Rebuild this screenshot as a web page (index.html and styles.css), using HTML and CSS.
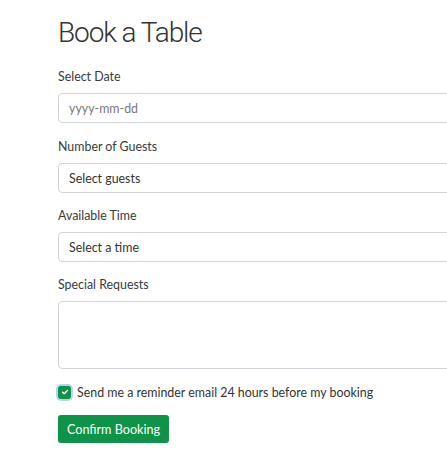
FILE: index.html
```html
<!DOCTYPE html>
<html>
<head>
<meta charset="utf-8">
<link rel="stylesheet" href="styles.css">
</head>
<body>
<main class="page">
  <h1 class="title">Book a Table</h1>
  <form class="form">
    <div class="group">
      <label class="label">Select Date</label>
      <div class="field muted">yyyy-mm-dd</div>
    </div>
    <div class="group">
      <label class="label">Number of Guests</label>
      <div class="field">Select guests</div>
    </div>
    <div class="group">
      <label class="label">Available Time</label>
      <div class="field">Select a time</div>
    </div>
    <div class="group">
      <label class="label">Special Requests</label>
      <div class="field area"></div>
    </div>
    <div class="check-row">
      <span class="check"><svg viewBox="0 0 10 10" width="8" height="8"><path d="M2 5.2 L4.1 7.2 L8 3" fill="none" stroke="#fff" stroke-width="1.8" stroke-linecap="round" stroke-linejoin="round"/></svg></span>
      <span class="check-text">Send me a reminder email 24 hours before my booking</span>
    </div>
    <button type="button" class="btn">Confirm Booking</button>
  </form>
</main>
</body>
</html>
```
FILE: styles.css
```css
html, body {
  margin: 0;
  padding: 0;
  overflow: hidden;
  background: #fff;
}
body {
  font-family: Lato, "Open Sans", sans-serif;
  color: #333;
  font-size: 12.4px;
}
.page {
  padding: 16px 0 0 58px;
  width: 389px;
  box-sizing: content-box;
  overflow: hidden;
}
.title {
  margin: 0 0 17px 0;
  font-family: Roboto, sans-serif;
  font-weight: 300;
  font-size: 28px;
  line-height: 34px;
  letter-spacing: -1.1px;
  color: #333;
}
.form {
  display: flex;
  flex-direction: column;
}
.group {
  display: flex;
  flex-direction: column;
  margin-bottom: 13px;
}
.group:first-child {
  margin-bottom: 14px;
}
.label {
  line-height: 20px;
  margin-bottom: 6px;
  color: #3a3a3a;
}
.field {
  box-sizing: border-box;
  height: 30px;
  width: 430px;
  border: 1px solid #ced4da;
  border-radius: 4px;
  padding: 0 10px;
  display: flex;
  align-items: center;
  color: #333;
}
.field.muted {
  color: #777;
}
.field.area {
  height: 68px;
}
.check-row {
  display: flex;
  align-items: center;
  gap: 6px;
  height: 20px;
  margin-top: 0;
  margin-bottom: 13px;
}
.check {
  width: 13px;
  height: 13px;
  border-radius: 3px;
  background: #0d9448;
  box-shadow: 0 0 0 2px #b8d4f5;
  display: flex;
  align-items: center;
  justify-content: center;
}
.check-text {
  color: #333;
}
.btn {
  align-self: flex-start;
  width: 111px;
  height: 28px;
  border: none;
  border-radius: 3px;
  background: #0d9448;
  color: #fff;
  font-family: Lato, sans-serif;
  font-size: 12.6px;
  padding: 0;
}
```
